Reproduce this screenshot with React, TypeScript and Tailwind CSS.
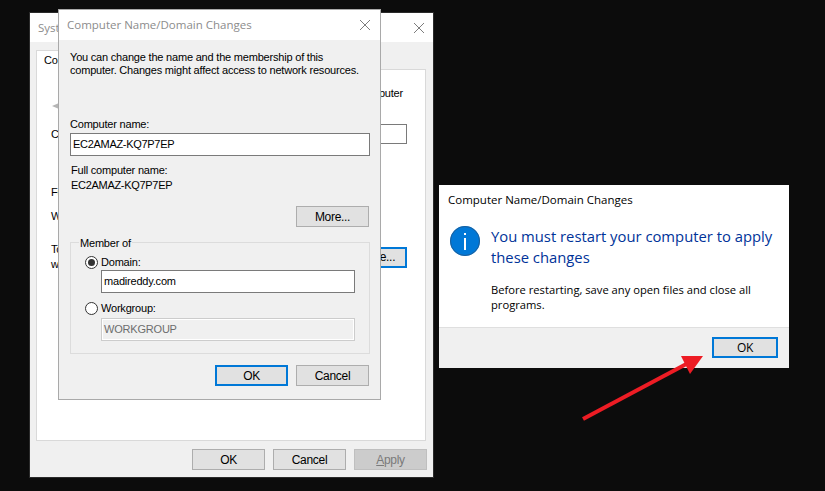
const sans = "font-['Liberation_Sans',Arial,sans-serif] text-[11px] tracking-[-0.2px]";
const segoe = "font-['Open_Sans','Noto_Sans',sans-serif] tracking-normal";

function Btn({ label, primary, disabled, className = "w-[73px]" }: { label: React.ReactNode; primary?: boolean; disabled?: boolean; className?: string }) {
  return (
    <div
      className={`flex h-[21px] items-center justify-center text-[12px] tracking-[-0.3px] ${
        primary
          ? "border-2 border-[#0078d7] bg-[#e1e1e1] text-black"
          : disabled
            ? "border border-[#bfbfbf] bg-[#cccccc] text-[#7a7a7a]"
            : "border border-[#adadad] bg-[#e1e1e1] text-black"
      } ${className}`}
    >
      {label}
    </div>
  );
}

function CloseX() {
  return (
    <svg width="12" height="12" viewBox="0 0 12 12" className="text-[#7d7d7d]">
      <path d="M1 1l10 10M11 1L1 11" stroke="currentColor" strokeWidth="1" fill="none" />
    </svg>
  );
}

function Radio({ checked }: { checked?: boolean }) {
  return (
    <div className="flex h-[13px] w-[13px] items-center justify-center rounded-full border border-[#333] bg-white">
      {checked && <div className="h-[7px] w-[7px] rounded-full bg-[#333]" />}
    </div>
  );
}

function SystemWindow() {
  return (
    <div className={`absolute left-[29px] top-[12px] flex h-[466px] w-[405px] flex-col border border-[#2b2b2b] bg-[#f0f0f0] ${sans}`}>
      <div className="flex h-[29px] items-center justify-between bg-white pl-[8px] pr-[8px]">
        <span className={`text-[11.5px] text-[#8c8c8c] ${segoe}`}>System Properties</span>
        <CloseX />
      </div>
      <div className="relative ml-[6px] mr-[7px] mt-[27px] flex h-[372px] flex-col border border-[#d9d9d9] bg-white pl-[14px] pr-[18px]">
        <div className="absolute -top-[20px] -left-px flex h-[20px] w-[120px] items-center border border-b-0 border-[#d9d9d9] bg-white pl-[7px] text-black">
          Computer Name
        </div>
        <div className="mt-[16px] whitespace-nowrap pl-[15px] pr-[4px] text-right leading-[14px] text-black">
          Windows uses the following information to identify your computer
        </div>
        <svg width="8" height="6" viewBox="0 0 8 6" className="ml-px mt-[3px]">
          <path d="M0 3L7 0V6Z" fill="#b5b5b5" />
        </svg>
        <div className="mt-[15px] flex items-center justify-between text-black">
          <span>Computer description:</span>
          <div className="h-[20px] w-[240px] border border-[#7a7a7a] bg-white" />
        </div>
        <div className="mt-[41px] leading-[14px] text-black">Full computer name:</div>
        <div className="mt-[10px] leading-[14px] text-black">Workgroup:</div>
        <div className="mt-[19px] flex items-center justify-between">
          <div className="leading-[15px] text-black">
            To rename this computer or change its domain or
            <br />
            workgroup, click Change.
          </div>
          <Btn primary label="Change..." />
        </div>
      </div>
      <div className="mr-[6px] mt-[8px] flex justify-end gap-[8px]">
        <Btn label="OK" />
        <Btn label="Cancel" />
        <Btn disabled label={<span><span className="underline">A</span>pply</span>} />
      </div>
    </div>
  );
}

function NameDialog() {
  return (
    <div className={`absolute left-[58px] top-[9px] flex h-[391px] w-[323px] flex-col border border-[#a9a9a9] bg-[#f0f0f0] ${sans}`}>
      <div className="flex h-[30px] items-center justify-between bg-white pl-[8px] pr-[9px]">
        <span className={`text-[11.5px] text-[#8c8c8c] ${segoe}`}>Computer Name/Domain Changes</span>
        <CloseX />
      </div>
      <div className="flex flex-1 flex-col px-[11px] text-black">
        <p className="mt-[11px] whitespace-nowrap leading-[13px]">
          You can change the name and the membership of this
          <br />
          computer. Changes might affect access to network resources.
        </p>
        <div className="mt-[40px] leading-[14px]">Computer name:</div>
        <div className="mt-[2px] flex h-[23px] w-[300px] items-center border border-[#7a7a7a] bg-white pl-[2px] tracking-[-0.3px]">EC2AMAZ-KQ7P7EP</div>
        <div className="mt-[7px] pl-px leading-[14px]">Full computer name:</div>
        <div className="mt-px pl-px leading-[14px] tracking-[-0.3px]">EC2AMAZ-KQ7P7EP</div>
        <div className="mt-[14px] flex justify-end">
          <Btn label="More..." />
        </div>
        <fieldset className="relative mt-[15px] h-[112px] w-[300px] border border-[#dcdcdc] px-[14px]">
          <legend className="absolute -top-[7px] left-[8px] bg-[#f0f0f0] px-px leading-[14px]">Member of</legend>
          <div className="mt-[12px] flex items-center gap-[3px] leading-[14px]">
            <Radio checked />
            <span>Domain:</span>
          </div>
          <div className="ml-[16px] mt-px flex h-[23px] w-[254px] items-center border border-[#7a7a7a] bg-white pl-[2px]">madireddy.com</div>
          <div className="mt-[8px] flex items-center gap-[3px] leading-[14px]">
            <Radio />
            <span>Workgroup:</span>
          </div>
          <div className="ml-[16px] mt-[3px] flex h-[23px] w-[254px] items-center border border-[#cccccc] bg-[#f0f0f0] pl-[2px] text-[#6d6d6d] shadow-[inset_0_0_0_1px_#ffffff]">WORKGROUP</div>
        </fieldset>
        <div className="mt-[11px] flex justify-end gap-[8px]">
          <Btn primary label="OK" />
          <Btn label="Cancel" />
        </div>
      </div>
    </div>
  );
}

function RestartDialog() {
  return (
    <div className={`absolute left-[439px] top-[185px] flex h-[183px] w-[350px] flex-col bg-white ${segoe}`}>
      <div className="pl-[9px] pt-[6px] text-[11.5px] leading-[17px] text-black">Computer Name/Domain Changes</div>
      <div className="flex flex-1 pl-[11px] pt-[17px]">
        <svg width="30" height="30" viewBox="0 0 30 30" className="mt-[1px] shrink-0">
          <circle cx="15" cy="15" r="15" fill="#0078d7" />
          <circle cx="15" cy="15" r="14.5" fill="none" stroke="#1f5f99" strokeWidth="1" />
          <rect x="14" y="7" width="2" height="2" fill="#fff" />
          <rect x="14" y="12" width="2" height="12" fill="#fff" />
        </svg>
        <div className="ml-[11px]">
          <div className="mt-px text-[14.8px] leading-[21px] text-[#003399]">
            You must restart your computer to apply
            <br />
            these changes
          </div>
          <div className="mt-[14px] text-[11.2px] leading-[15px] text-black">
            Before restarting, save any open files and close all
            <br />
            programs.
          </div>
        </div>
      </div>
      <div className="flex h-[41px] items-start justify-end border-t border-[#dfdfdf] bg-[#f0f0f0] pr-[11px] pt-[9px]">
        <Btn primary label="OK" className="w-[66px]" />
      </div>
    </div>
  );
}

export default function App() {
  return (
    <div className="relative h-[491px] w-[825px] overflow-hidden bg-[#0c0c0c]">
      <SystemWindow />
      <NameDialog />
      <RestartDialog />
      {/* red arrow */}
      <svg width="825" height="491" className="pointer-events-none absolute left-0 top-0">
        <path d="M583 419L692 361" stroke="#ed1c24" strokeWidth="4" fill="none" />
        <path d="M681 356L703 356L690 374Z" fill="#ed1c24" />
      </svg>
    </div>
  );
}
